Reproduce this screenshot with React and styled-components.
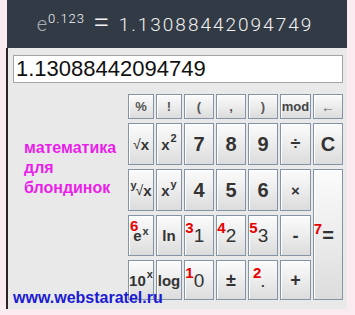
import React from "react";
import styled, { createGlobalStyle } from "styled-components";

const GlobalStyle = createGlobalStyle`
  html, body {
    margin: 0;
    padding: 0;
    background: #f9ebf0;
  }
  body {
    font-family: "Liberation Sans", Arial, sans-serif;
  }
`;

const Frame = styled.div`
  width: 340px;
  margin-left: 7px;
`;

const Header = styled.div`
  height: 48px;
  background: #323a45;
  display: flex;
  align-items: center;
  justify-content: center;
  color: #f2f2f2;
  font-family: Roboto, "DejaVu Sans", sans-serif;
  font-weight: 300;
  padding-right: 4px;
  box-sizing: border-box;
`;

const Formula = styled.div`
  display: flex;
  align-items: baseline;
  font-size: 19px;
  line-height: 1;
  margin-top: -3px;
`;

const E = styled.span`
  color: #a9adb3;
  font-size: 20px;
`;

const Sup = styled.span`
  font-size: 13px;
  position: relative;
  top: -8px;
  letter-spacing: 1px;
  margin-left: 1px;
`;

const Eq = styled.span`
  margin: 0 9px 0 8px;
  font-size: 30px;
  line-height: 0.6;
  position: relative;
  top: 1px;
`;

const Value = styled.span`
  letter-spacing: 2px;
`;

const Panel = styled.div`
  position: relative;
  height: 261px;
  margin-left: -1px;
  border-left: 2px solid #2c2428;
  background: #e9e9e9;
  padding: 7px 4px 0 5px;
  box-sizing: border-box;
`;

const Display = styled.div`
  height: 28px;
  background: #fff;
  border: 1px solid #a4a4a4;
  box-sizing: border-box;
  font-size: 22px;
  line-height: 26px;
  padding-left: 2px;
  color: #111;
`;

const Keypad = styled.div`
  display: grid;
  grid-template-columns: 1fr 26px 26px 30px 30px 30px 31px 30px;
  grid-template-rows: 25px 42px 42px 41px 40px;
  column-gap: 2px;
  row-gap: 4px;
  margin-top: 11px;
`;

const Slogan = styled.div`
  grid-column: 1;
  grid-row: 2 / 4;
  align-self: center;
  padding-left: 11px;
  color: #ea1eea;
  font-weight: bold;
  font-size: 16px;
  line-height: 20px;
  margin-top: 2px;
`;

const Key = styled.button`
  grid-column: ${(p) => p.col};
  grid-row: ${(p) => p.row || "auto"};
  margin: 0;
  padding: 0;
  border: 1px solid #8494a6;
  border-radius: 0;
  background: linear-gradient(#fbfbfb 0%, #eeeeee 45%, #dcdcdc 100%);
  box-shadow: inset 1px 1px 0 #ffffff;
  display: flex;
  align-items: center;
  justify-content: center;
  font-family: "Liberation Sans", Arial, sans-serif;
  font-size: ${(p) => p.size || 15}px;
  font-weight: ${(p) => (p.light ? "normal" : "bold")};
  color: ${(p) => p.tone || "#333"};
  line-height: 1;
  white-space: nowrap;
`;

const Label = styled.span`
  position: relative;
  display: inline-block;
`;

const Mark = styled.span`
  position: absolute;
  right: calc(100% + ${(p) => p.shift || 0}px);
  bottom: ${(p) => p.lift || 12}px;
  color: #e60000;
  font-size: 15px;
  font-weight: bold;
  line-height: 11px;
`;

const Up = styled.sup`
  font-size: 11px;
  vertical-align: 0;
  position: relative;
  top: -6px;
  margin-left: 1px;
`;

const Root = styled.span`
  font-weight: normal;
  font-size: 14px;
`;

const PreUp = styled.sup`
  font-size: 11px;
  vertical-align: 0;
  position: relative;
  top: -5px;
  margin-right: -1px;
`;

const Footer = styled.div`
  position: absolute;
  left: 5px;
  top: 241px;
  color: #1b1bd4;
  font-weight: bold;
  font-size: 16px;
  line-height: 18px;
`;

const Digit = ({ mark, shift, lift, children }) => (
  <Label>
    {mark && (
      <Mark shift={shift} lift={lift}>
        {mark}
      </Mark>
    )}
    {children}
  </Label>
);

export default function App() {
  return (
    <>
      <GlobalStyle />
      <Frame>
        <Header>
          <Formula>
            <E>e</E>
            <Sup>0.123</Sup>
            <Eq>=</Eq>
            <Value>1.13088442094749</Value>
          </Formula>
        </Header>
        <Panel>
          <Display>1.13088442094749</Display>
          <Keypad>
            <Key col={2} size={13} tone="#555">%</Key>
            <Key col={3} size={13} tone="#555">!</Key>
            <Key col={4} size={13} tone="#555">(</Key>
            <Key col={5} size={13} tone="#555">,</Key>
            <Key col={6} size={13} tone="#555">)</Key>
            <Key col={7} size={13} tone="#444">mod</Key>
            <Key col={8} size={14} tone="#666" light>←</Key>

            <Slogan>
              математика
              <br />
              для
              <br />
              блондинок
            </Slogan>

            <Key col={2}>
              <Root>√</Root>x
            </Key>
            <Key col={3}>
              x<Up>2</Up>
            </Key>
            <Key col={4} size={20}>7</Key>
            <Key col={5} size={20}>8</Key>
            <Key col={6} size={20}>9</Key>
            <Key col={7} size={18}>÷</Key>
            <Key col={8} size={20}>C</Key>

            <Key col={2}>
              <PreUp>y</PreUp>
              <Root>√</Root>x
            </Key>
            <Key col={3}>
              x<Up>y</Up>
            </Key>
            <Key col={4} size={20}>4</Key>
            <Key col={5} size={20}>5</Key>
            <Key col={6} size={20}>6</Key>
            <Key col={7} size={15}>×</Key>
            <Key col={8} row="3 / 6" size={20}>
              <Digit mark="7" lift={11}>=</Digit>
            </Key>

            <Key col={2}>
              <Digit mark="6" shift={-5} lift={12}>
                e<Up>x</Up>
              </Digit>
            </Key>
            <Key col={3}>ln</Key>
            <Key col={4} size={19} light>
              <Digit mark="3">1</Digit>
            </Key>
            <Key col={5} size={19} light>
              <Digit mark="4">2</Digit>
            </Key>
            <Key col={6} size={19} light>
              <Digit mark="5">3</Digit>
            </Key>
            <Key col={7} size={18}>-</Key>

            <Key col={2}>
              10<Up>x</Up>
            </Key>
            <Key col={3}>log</Key>
            <Key col={4} size={19} light>
              <Digit mark="1">0</Digit>
            </Key>
            <Key col={5} size={18}>±</Key>
            <Key col={6} size={19} light>
              <Digit mark="2" shift={-1}>.</Digit>
            </Key>
            <Key col={7} size={18}>+</Key>
          </Keypad>
          <Footer>www.webstaratel.ru</Footer>
        </Panel>
      </Frame>
    </>
  );
}
